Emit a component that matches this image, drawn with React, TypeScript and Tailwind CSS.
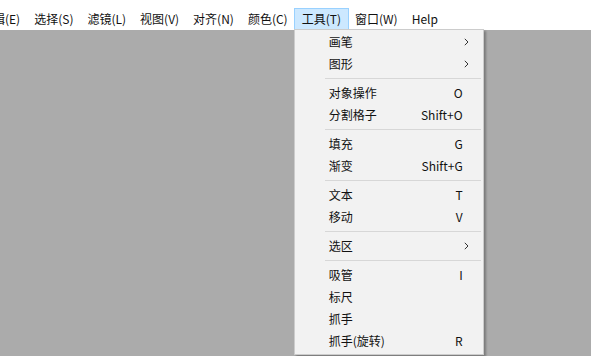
const menuBar = [
  { label: "编辑(E)" },
  { label: "选择(S)" },
  { label: "滤镜(L)" },
  { label: "视图(V)" },
  { label: "对齐(N)" },
  { label: "颜色(C)" },
  { label: "工具(T)", active: true },
  { label: "窗口(W)" },
  { label: "Help" },
];

type Entry =
  | { type: "item"; label: string; shortcut?: string; sub?: boolean }
  | { type: "sep" };

const toolMenu: Entry[] = [
  { type: "item", label: "画笔", sub: true },
  { type: "item", label: "图形", sub: true },
  { type: "sep" },
  { type: "item", label: "对象操作", shortcut: "O" },
  { type: "item", label: "分割格子", shortcut: "Shift+O" },
  { type: "sep" },
  { type: "item", label: "填充", shortcut: "G" },
  { type: "item", label: "渐变", shortcut: "Shift+G" },
  { type: "sep" },
  { type: "item", label: "文本", shortcut: "T" },
  { type: "item", label: "移动", shortcut: "V" },
  { type: "sep" },
  { type: "item", label: "选区", sub: true },
  { type: "sep" },
  { type: "item", label: "吸管", shortcut: "I" },
  { type: "item", label: "标尺" },
  { type: "item", label: "抓手" },
  { type: "item", label: "抓手(旋转)", shortcut: "R" },
];

function Chevron() {
  return (
    <svg width="5" height="8" viewBox="0 0 5 8" className="mr-[-6px]">
      <path d="M0.8 0.8 L4 4 L0.8 7.2" fill="none" stroke="#333" strokeWidth="1" />
    </svg>
  );
}

export default function App() {
  return (
    <div
      className="w-[591px] h-[356px] overflow-hidden bg-[#ababab] text-[12px] text-[#111]"
      style={{ fontFamily: '"Noto Sans CJK SC", "Noto Sans", sans-serif' }}
    >
      {/* menu bar */}
      <div className="relative h-[30px] bg-white flex items-end pb-[1px]">
        <div className="flex items-center -ml-[26px]">
          {menuBar.map((m, i) => (
            <div key={i} className="relative">
              <div
                className={`h-[20px] px-[7px] flex items-center leading-none whitespace-nowrap ${
                  m.active ? "bg-[#cce8ff] outline outline-1 outline-[#99d1ff]" : ""
                }`}
              >
                {m.label}
              </div>

              {m.active && (
                <div className="absolute left-[-1px] top-[20px] z-10 w-[190px] bg-[#f2f2f2] border border-[#cccccc] pt-[1px] pb-[2px] shadow-[2px_2px_2px_rgba(0,0,0,0.28)]">
                  {toolMenu.map((e, j) =>
                    e.type === "sep" ? (
                      <div key={j} className="h-[7px] flex items-center pl-[30px] pr-[2px]">
                        <div className="h-px w-full bg-[#d7d7d7]" />
                      </div>
                    ) : (
                      <div
                        key={j}
                        className="h-[22px] flex items-center justify-between pl-[34px] pr-[20px] whitespace-nowrap"
                      >
                        <span>{e.label}</span>
                        {e.sub ? <Chevron /> : <span>{e.shortcut}</span>}
                      </div>
                    )
                  )}
                </div>
              )}
            </div>
          ))}
        </div>
      </div>
    </div>
  );
}
